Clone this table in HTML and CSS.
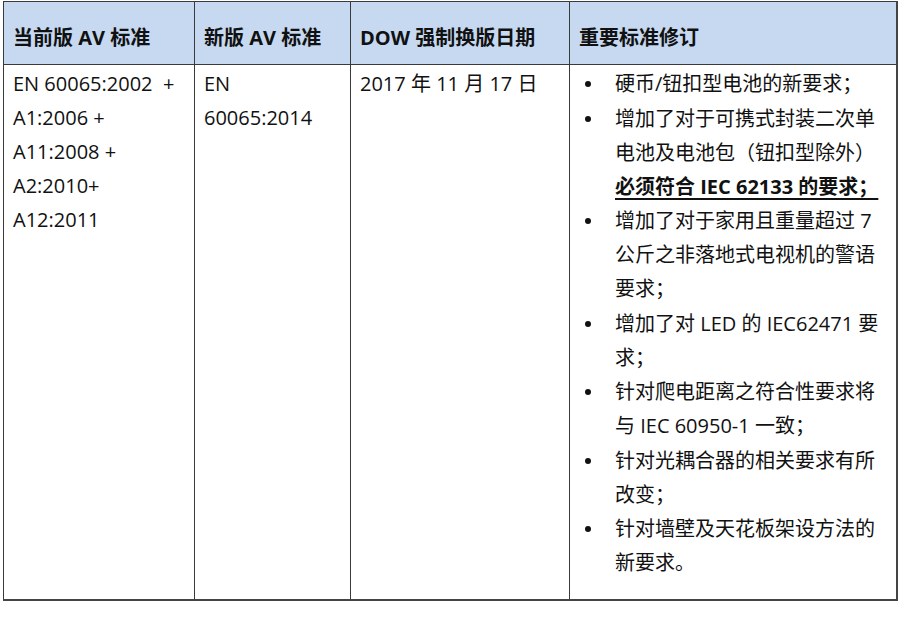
FILE: index.html
```html
<!DOCTYPE html>
<html lang="zh-CN">
<head>
<meta charset="utf-8">
<title>AV 标准</title>
<link rel="stylesheet" href="styles.css">
</head>
<body>
<table class="std">
  <colgroup>
    <col class="c1"><col class="c2"><col class="c3"><col class="c4">
  </colgroup>
  <thead>
    <tr>
      <th>当前版 AV 标准</th>
      <th>新版 AV 标准</th>
      <th>DOW 强制换版日期</th>
      <th>重要标准修订</th>
    </tr>
  </thead>
  <tbody>
    <tr>
      <td>EN 60065:2002&nbsp; +<br>A1:2006 +<br>A11:2008 +<br>A2:2010+<br>A12:2011</td>
      <td>EN<br>60065:2014</td>
      <td>2017 年 11 月 17 日</td>
      <td>
        <ul class="rev">
          <li>硬币/钮扣型电池的新要求；</li>
          <li>增加了对于可携式封装二次单<br>电池及电池包（钮扣型除外）<br><strong class="em">必须符合 IEC 62133 的要求；</strong></li>
          <li>增加了对于家用且重量超过 7<br>公斤之非落地式电视机的警语<br>要求；</li>
          <li>增加了对 LED 的 IEC62471 要<br>求；</li>
          <li>针对爬电距离之符合性要求将<br>与 IEC 60950-1 一致；</li>
          <li>针对光耦合器的相关要求有所<br>改变；</li>
          <li>针对墙壁及天花板架设方法的<br>新要求。</li>
        </ul>
      </td>
    </tr>
  </tbody>
</table>
</body>
</html>
```
FILE: styles.css
```css
html, body {
  margin: 0;
  padding: 0;
  background: #ffffff;
}
body {
  padding: 1px 0 0 3px;
  font-family: "Open Sans", "Noto Sans CJK SC", sans-serif;
  color: #111111;
}
.std {
  border-collapse: collapse;
  table-layout: fixed;
  width: 893px;
  border-right: 2px solid #444;
  border-bottom: 2px solid #444;
}
.c1 { width: 191px; }
.c2 { width: 156px; }
.c3 { width: 219px; }
.c4 { width: 327px; }
.std th, .std td {
  border: 1px solid #3a3a3a;
  font-size: 20px;
  line-height: 34px;
  text-align: left;
  vertical-align: top;
  white-space: nowrap;
}
.std th {
  background: #c6d9f1;
  font-weight: 700;
  padding: 19px 9px 9px 9px;
}
.std td {
  padding: 2px 9px 19px 9px;
}
.rev {
  list-style: none;
  margin: 0;
  padding: 0;
}
.rev li {
  position: relative;
  padding-left: 36px;
}
.rev li + li {
  margin-top: 0.5px;
}
.rev li::before {
  content: "";
  position: absolute;
  left: 6px;
  top: 14px;
  width: 6px;
  height: 6px;
  border-radius: 50%;
  background: #111;
}
.em {
  font-weight: 700;
  text-decoration: underline;
  text-underline-offset: 4px;
}
```
